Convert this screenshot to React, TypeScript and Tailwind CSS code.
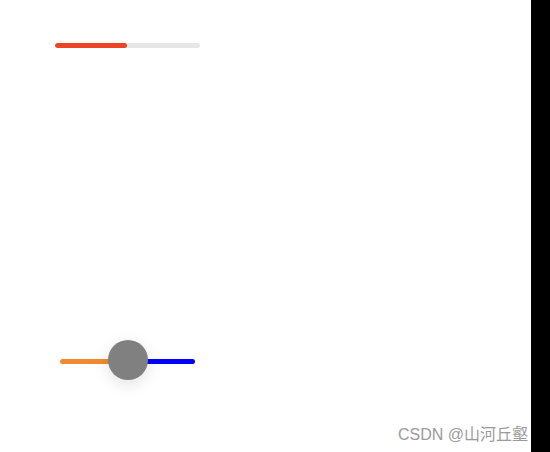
export default function App() {
  return (
    <div className="flex h-[452px] w-[550px] bg-black" style={{ fontFamily: '"Liberation Sans", "Noto Sans CJK SC", sans-serif' }}>
      <div className="relative flex w-[531px] flex-col bg-white">
        {/* progress bar */}
        <div className="ml-[55px] mt-[43px] h-[5px] w-[145px] overflow-hidden rounded-full bg-[#e6e6e6]">
          <div className="h-full w-[72px] rounded-full bg-[#ee4426]" />
        </div>

        {/* slider */}
        <div className="relative ml-[60px] mt-[292px] flex h-[40px] w-[135px] items-center">
          <div className="mt-[2px] flex h-[5px] w-full">
            <div className="h-full w-[68px] rounded-l-full bg-[#f08a2c]" />
            <div className="h-full flex-1 rounded-r-full bg-[#0000ff]" />
          </div>
          <div className="absolute left-[48px] top-0 h-[40px] w-[40px] rounded-full bg-[#808080] shadow-[0_4px_16px_rgba(0,0,0,0.12)]" />
        </div>

        <div className="absolute left-[398px] top-[423px] whitespace-nowrap text-[16px] text-[#9a9a9a]">
          CSDN @山河丘壑
        </div>
      </div>
    </div>
  );
}
